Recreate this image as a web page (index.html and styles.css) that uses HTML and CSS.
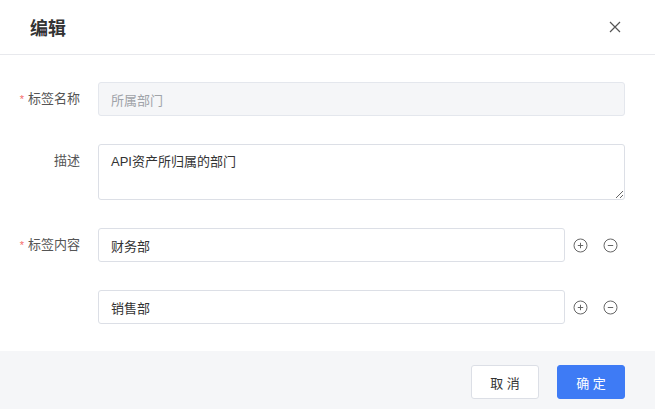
FILE: index.html
```html
<!DOCTYPE html>
<html lang="zh-CN">
<head>
    <meta charset="UTF-8">
    <meta name="viewport" content="width=device-width, initial-scale=1.0">
    <title>编辑</title>
    <link rel="stylesheet" href="styles.css">
</head>
<body>
  <div class="dialog">
    <div class="dialog-header">
      <span class="dialog-title">编辑</span>
      <button class="close-btn" type="button" aria-label="关闭">
        <svg width="12" height="12" viewBox="0 0 12 12">
          <path d="M1 1 L11 11 M11 1 L1 11" stroke="#555" stroke-width="1.2" fill="none"/>
        </svg>
      </button>
    </div>

    <form class="dialog-body">
      <div class="form-row">
        <label class="form-label required">标签名称</label>
        <input class="form-input" type="text" value="所属部门" disabled>
      </div>

      <div class="form-row">
        <label class="form-label">描述</label>
        <textarea class="form-input form-textarea">API资产所归属的部门</textarea>
      </div>

      <div class="form-row">
        <label class="form-label required">标签内容</label>
        <div class="tag-line">
          <input class="form-input" type="text" value="财务部">
          <span class="icon-btn">
            <svg width="15" height="15" viewBox="0 0 15 15"><circle cx="7.5" cy="7.5" r="6.5" stroke="#666" fill="none"/><path d="M7.5 4.8 V10.2 M4.8 7.5 H10.2" stroke="#666"/></svg>
          </span>
          <span class="icon-btn">
            <svg width="15" height="15" viewBox="0 0 15 15"><circle cx="7.5" cy="7.5" r="6.5" stroke="#666" fill="none"/><path d="M4.8 7.5 H10.2" stroke="#666"/></svg>
          </span>
        </div>
      </div>

      <div class="form-row">
        <label class="form-label"></label>
        <div class="tag-line">
          <input class="form-input" type="text" value="销售部">
          <span class="icon-btn">
            <svg width="15" height="15" viewBox="0 0 15 15"><circle cx="7.5" cy="7.5" r="6.5" stroke="#666" fill="none"/><path d="M7.5 4.8 V10.2 M4.8 7.5 H10.2" stroke="#666"/></svg>
          </span>
          <span class="icon-btn">
            <svg width="15" height="15" viewBox="0 0 15 15"><circle cx="7.5" cy="7.5" r="6.5" stroke="#666" fill="none"/><path d="M4.8 7.5 H10.2" stroke="#666"/></svg>
          </span>
        </div>
      </div>
    </form>

    <div class="dialog-footer">
      <button class="btn" type="button">取 消</button>
      <button class="btn btn-primary" type="button">确 定</button>
    </div>
  </div>
</body>
</html>
```

FILE: styles.css
```css
/* 基本 */
body {
    margin: 0;
    font-family: "Liberation Sans", "Noto Sans CJK SC", sans-serif;
    color: #333;
    background: #ffffff;
}

.dialog {
    width: 655px;
    height: 409px;
    display: flex;
    flex-direction: column;
    background: #ffffff;
}

/* header */
.dialog-header {
    height: 54px;
    padding: 0 33px 0 30px;
    display: flex;
    align-items: center;
    justify-content: space-between;
    border-bottom: 1px solid #e8e9ed;
}

.dialog-title {
    font-size: 18px;
    font-weight: bold;
    color: #333;
}

.close-btn {
    border: none;
    background: none;
    padding: 0;
    width: 14px;
    height: 14px;
    display: flex;
    align-items: center;
    justify-content: center;
    cursor: pointer;
}

/* form */
.dialog-body {
    flex: 1;
    padding: 27px 30px 0 0;
    display: flex;
    flex-direction: column;
    gap: 28px;
}

.form-row {
    display: flex;
    align-items: flex-start;
}

.form-label {
    width: 80px;
    margin-right: 18px;
    text-align: right;
    font-size: 13px;
    line-height: 34px;
    color: #555;
    flex-shrink: 0;
}

.form-label.required::before {
    content: "*";
    color: #f56c6c;
    font-size: 11px;
    margin-right: 4px;
}

.form-input {
    flex: 1;
    box-sizing: border-box;
    height: 34px;
    padding: 0 12px;
    border: 1px solid #dcdfe6;
    border-radius: 3px;
    font-family: inherit;
    font-size: 13px;
    color: #333;
    background: #ffffff;
    outline: none;
}

.form-input:disabled {
    background: #f5f6f8;
    border-color: #e4e7ed;
    color: #a0a3a8;
}

.form-textarea {
    height: 56px;
    padding: 7px 12px;
    line-height: 20px;
}

.tag-line {
    flex: 1;
    display: flex;
    align-items: center;
}

.icon-btn {
    display: flex;
    margin-left: 8px;
    cursor: pointer;
}

.icon-btn + .icon-btn {
    margin-left: 15px;
    margin-right: 7px;
}

/* footer */
.dialog-footer {
    height: 58px;
    padding: 14px 30px 0 0;
    box-sizing: border-box;
    background: #f5f6f8;
    display: flex;
    justify-content: flex-end;
    align-items: flex-start;
    gap: 18px;
}

.btn {
    width: 68px;
    height: 34px;
    border: 1px solid #dcdfe6;
    border-radius: 3px;
    background: #ffffff;
    font-family: inherit;
    font-size: 13px;
    color: #333;
    cursor: pointer;
}

.btn-primary {
    background: #3e7bf5;
    border-color: #3e7bf5;
    color: #ffffff;
}
```
